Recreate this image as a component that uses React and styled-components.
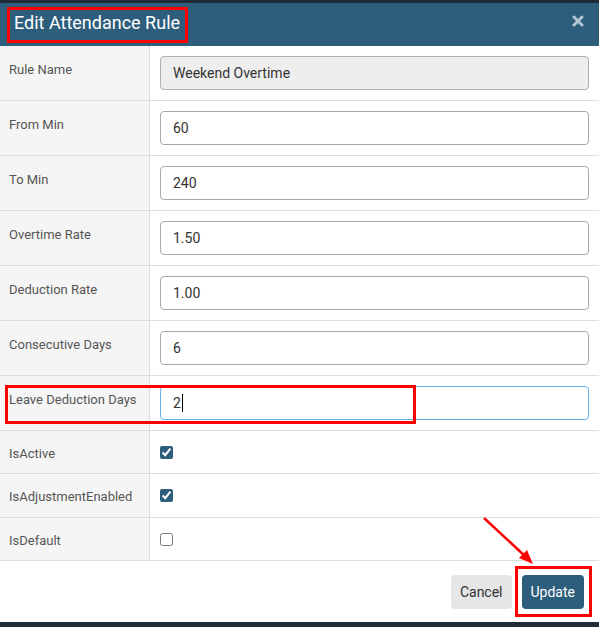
import React from 'react';
import styled, { createGlobalStyle } from 'styled-components';

const GlobalStyle = createGlobalStyle`
  html, body {
    margin: 0;
    padding: 0;
    background: #1e2c38;
  }
  * {
    box-sizing: border-box;
  }
`;

const fields = [
  { label: 'Rule Name', value: 'Weekend Overtime', disabled: true },
  { label: 'From Min', value: '60' },
  { label: 'To Min', value: '240' },
  { label: 'Overtime Rate', value: '1.50' },
  { label: 'Deduction Rate', value: '1.00' },
  { label: 'Consecutive Days', value: '6' },
  { label: 'Leave Deduction Days', value: '2', focused: true }
];

const flags = [
  { label: 'IsActive', checked: true, height: 43 },
  { label: 'IsAdjustmentEnabled', checked: true, height: 44 },
  { label: 'IsDefault', checked: false, height: 43 }
];

const App = () => {
  return (
    <>
      <GlobalStyle />
      <Modal>
        <TopStrip />
        <Header>
          <Title>Edit Attendance Rule</Title>
          <CloseButton aria-label="Close">
            <svg width="12" height="12" viewBox="0 0 12 12">
              <path d="M2 2 L10 10 M10 2 L2 10" stroke="#b3c6d4" strokeWidth="3" strokeLinecap="round" />
            </svg>
          </CloseButton>
        </Header>

        <Form>
          {fields.map((f) => (
            <Row key={f.label} $height={55}>
              <LabelCell $top>{f.label}</LabelCell>
              <ValueCell>
                {f.focused ? (
                  <FakeInput>
                    {f.value}
                    <Caret />
                  </FakeInput>
                ) : (
                  <Input readOnly defaultValue={f.value} $disabled={f.disabled} />
                )}
              </ValueCell>
            </Row>
          ))}
          {flags.map((f) => (
            <Row key={f.label} $height={f.height}>
              <LabelCell>{f.label}</LabelCell>
              <ValueCell>
                <Check type="checkbox" defaultChecked={f.checked} />
              </ValueCell>
            </Row>
          ))}
        </Form>

        <Footer>
          <Button>Cancel</Button>
          <Button $primary>Update</Button>
        </Footer>
        <BottomStrip />

        <Highlight style={{ left: 7, top: 7, width: 181, height: 36 }} />
        <Highlight style={{ left: 5, top: 385, width: 411, height: 39 }} />
        <Highlight style={{ left: 515, top: 566, width: 77, height: 51 }} />
        <Arrow width="599" height="627" viewBox="0 0 599 627">
          <line x1="484" y1="518" x2="526" y2="557" stroke="#f00" strokeWidth="2.5" />
          <polygon points="533,564 519,558 527,550" fill="#f00" />
        </Arrow>
      </Modal>
    </>
  );
};

const Modal = styled.div`
  position: relative;
  width: 599px;
  height: 627px;
  display: flex;
  flex-direction: column;
  background: #fff;
  font-family: Roboto, 'Liberation Sans', sans-serif;
  overflow: hidden;
`;

const TopStrip = styled.div`
  height: 3px;
  background: #1e2c38;
`;

const BottomStrip = styled.div`
  flex: 1;
  background: #1e2c38;
`;

const Header = styled.div`
  height: 43px;
  background: #2d5e7b;
  display: flex;
  align-items: center;
  justify-content: space-between;
  padding: 0 15px 0 14px;
`;

const Title = styled.h4`
  margin: -4px 0 0;
  font-size: 18px;
  font-weight: 400;
  color: #fff;
  line-height: 28px;
`;

const CloseButton = styled.span`
  display: flex;
  margin-top: -7px;
`;

const Form = styled.div`
  display: flex;
  flex-direction: column;
`;

const Row = styled.div`
  display: grid;
  grid-template-columns: 150px 1fr;
  height: ${(p) => p.$height}px;
  border-bottom: 1px solid #dddddd;
`;

const LabelCell = styled.div`
  background: #f5f5f5;
  border-right: 1px solid #dddddd;
  padding: ${(p) => (p.$top ? '16px 0 0 9px' : '3px 0 0 9px')};
  display: flex;
  align-items: ${(p) => (p.$top ? 'flex-start' : 'center')};
  font-size: 13px;
  line-height: 16px;
  color: #555;
`;

const ValueCell = styled.div`
  display: flex;
  align-items: center;
  padding: 0 10px;
`;

const Input = styled.input`
  width: 429px;
  height: 34px;
  padding: 0 12px;
  border: 1px solid ${(p) => (p.$disabled ? '#b0b0b0' : '#a9a9a9')};
  border-radius: 4px;
  background: ${(p) => (p.$disabled ? '#eeeeee' : '#fff')};
  font-family: Roboto, 'Liberation Sans', sans-serif;
  font-size: 14px;
  color: #333;
  outline: none;
`;

const FakeInput = styled.div`
  width: 429px;
  height: 34px;
  padding: 0 12px;
  display: flex;
  align-items: center;
  border: 1px solid #66afe9;
  border-radius: 4px;
  font-size: 14px;
  color: #333;
`;

const Caret = styled.span`
  display: inline-block;
  width: 1px;
  height: 18px;
  margin-left: 1px;
  background: #000;
`;

const Check = styled.input`
  width: 13px;
  height: 13px;
  margin: 0;
  accent-color: #2d5e7b;
`;

const Footer = styled.div`
  height: 61px;
  display: flex;
  align-items: center;
  justify-content: flex-end;
  gap: 10px;
  padding-right: 15px;
`;

const Button = styled.button`
  height: 34px;
  padding: 0 9px;
  border: none;
  border-radius: 4px;
  background: ${(p) => (p.$primary ? '#2d5e7b' : '#e6e6e6')};
  color: ${(p) => (p.$primary ? '#fff' : '#333')};
  font-family: Roboto, 'Liberation Sans', sans-serif;
  font-size: 14px;
`;

const Highlight = styled.div`
  position: absolute;
  border: 3px solid #f00;
  pointer-events: none;
`;

const Arrow = styled.svg`
  position: absolute;
  left: 0;
  top: 0;
  pointer-events: none;
`;

export default App;
